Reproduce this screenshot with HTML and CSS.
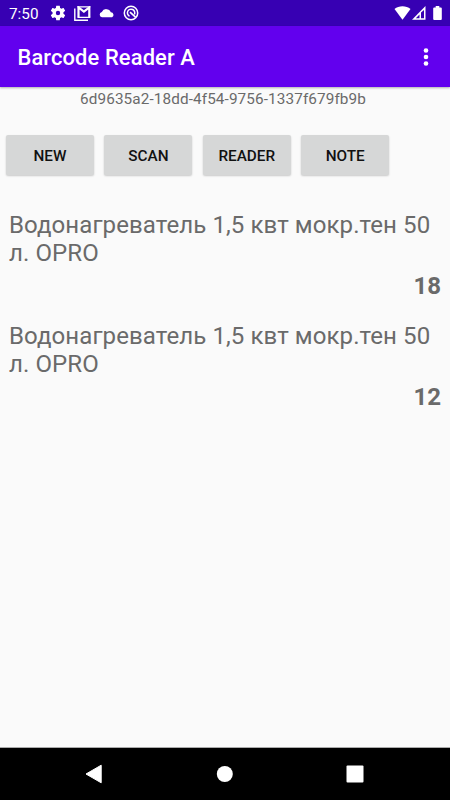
FILE: index.html
```html
<!DOCTYPE html>
<html lang="en">
<head>
    <meta charset="UTF-8">
    <meta name="viewport" content="width=device-width, initial-scale=1.0">
    <title>Barcode Reader A</title>
    <link rel="stylesheet" href="styles.css">
</head>
<body>
    <!-- Status bar -->
    <div class="status-bar">
        <span class="clock">7:50</span>
        <div class="notifications">
            <svg width="16" height="16" viewBox="1 1 22 22" fill="#fff"><path d="M19.43 12.98c.04-.32.07-.64.07-.98s-.03-.66-.07-.98l2.11-1.65c.19-.15.24-.42.12-.64l-2-3.46c-.12-.22-.39-.3-.61-.22l-2.49 1c-.52-.4-1.08-.73-1.69-.98l-.38-2.65C14.46 2.18 14.25 2 14 2h-4c-.25 0-.46.18-.49.42l-.38 2.65c-.61.25-1.17.59-1.69.98l-2.49-1c-.23-.09-.49 0-.61.22l-2 3.46c-.13.22-.07.49.12.64l2.11 1.65c-.04.32-.07.65-.07.98s.03.66.07.98l-2.11 1.65c-.19.15-.24.42-.12.64l2 3.46c.12.22.39.3.61.22l2.49-1c.52.4 1.08.73 1.69.98l.38 2.65c.03.24.24.42.49.42h4c.25 0 .46-.18.49-.42l.38-2.65c.61-.25 1.17-.59 1.69-.98l2.49 1c.23.09.49 0 .61-.22l2-3.46c.12-.22.07-.49-.12-.64l-2.11-1.65zM12 15A3 3 0 1 1 12 9a3 3 0 0 1 0 6z"/></svg>
            <svg width="17" height="15" viewBox="0 0 17 15" fill="none" stroke="#fff"><path d="M.8 2.500v11.700H14" stroke-width="1.400"/><path d="M4.500 11.300V1.500L9.900 5.700 15.300 1.500v9.800" stroke-width="2.200"/><path d="M3.500 .8h12.800M3.500 11.300h12.800" stroke-width="1.200"/></svg>
            <svg width="16" height="10" viewBox="0 0 16 10" fill="#fff"><path d="M3 9.200a2.700 2.700 0 0 1-.2-5.300A4.900 4.900 0 0 1 11.800 4.300a2.600 2.600 0 0 1 1.300 4.900z"/></svg>
            <svg width="16" height="16" viewBox="0 0 16 16" fill="none" stroke="#fff"><circle cx="8" cy="8" r="6.700" stroke-width="1.500"/><path d="M6.500 11.200A3.700 3.700 0 1 1 11.400 9.500" stroke-width="1.500"/><path d="M7 7.200l5.500 5" stroke-width="1.700"/></svg>
        </div>
        <div class="system-icons">
            <svg width="17" height="14" viewBox="0 0 17 14" fill="#fff"><path d="M.5 3C4.800-.7 12.200-.7 16.500 3L8.500 13.700z"/></svg>
            <svg width="14" height="14" viewBox="0 0 14 14"><path d="M13.500.1V13.800H0z" fill="#fff"/><path d="M7.500 8.500v3.700H3.800zM9 6.500l3-2.500v8.200H9z" fill="#3700b3"/></svg>
            <svg class="battery" width="9" height="15" viewBox="0 0 9 15" fill="#fff"><path d="M2.700 0h3.600v1.500h1.500q1 0 1 1V13q0 1-1 1H1.200q-1 0-1-1V2.500q0-1 1-1h1.500z"/></svg>
        </div>
    </div>

    <!-- App bar -->
    <header class="app-bar">
        <h1>Barcode Reader A</h1>
        <button class="menu-button" aria-label="More options">
            <svg width="6" height="20" viewBox="0 0 6 20" fill="#fff"><circle cx="3" cy="3.500" r="2.300"/><circle cx="3" cy="10" r="2.300"/><circle cx="3" cy="16.500" r="2.300"/></svg>
        </button>
    </header>

    <main class="content">
        <p class="device-id">6d9635a2-18dd-4f54-9756-1337f679fb9b</p>

        <div class="buttons">
            <button>NEW</button>
            <button>SCAN</button>
            <button>READER</button>
            <button>NOTE</button>
        </div>

        <ul class="items">
            <li>
                <p class="item-name">Водонагреватель 1,5 квт мокр.тен 50 л. OPRO</p>
                <p class="item-count">18</p>
            </li>
            <li>
                <p class="item-name">Водонагреватель 1,5 квт мокр.тен 50 л. OPRO</p>
                <p class="item-count">12</p>
            </li>
        </ul>
    </main>

    <!-- Navigation bar -->
    <nav class="nav-bar">
        <svg width="18" height="20" viewBox="0 0 18 20" fill="#fff"><path d="M16.200 1.200v17.600L1 10z" stroke="#fff" stroke-linejoin="round"/></svg>
        <svg width="18" height="18" viewBox="0 0 18 18" fill="#fff"><circle cx="9.800" cy="9" r="8"/></svg>
        <svg width="18" height="18" viewBox="0 0 18 18" fill="#fff"><rect x=".5" y=".5" width="17" height="17" rx="1"/></svg>
    </nav>
</body>
</html>
```
FILE: styles.css
```css
* {
    box-sizing: border-box;
}

body {
    display: flex;
    flex-direction: column;
    height: 800px;
    margin: 0;
    background: #fafafa;
    color: #6a6a6a;
    font-family: Roboto, sans-serif;
    overflow: hidden;
}

h1, p, ul {
    margin: 0;
    padding: 0;
}

svg {
    display: block;
}

button {
    border: none;
    padding: 0;
    font-family: inherit;
    cursor: pointer;
}

/* Status bar */
.status-bar {
    display: flex;
    align-items: center;
    flex: none;
    height: 26px;
    padding: 0 8px 0 9px;
    background: #3700b3;
    color: #fff;
}

.clock {
    width: 41px;
    font-size: 15.3px;
    line-height: 18px;
    padding-top: 2px;
}

.notifications {
    display: flex;
    align-items: center;
    gap: 8px;
}

.system-icons {
    display: flex;
    align-items: center;
    gap: 1px;
    margin-left: auto;
}

.battery {
    margin-left: 6px;
}

/* App bar */
.app-bar {
    display: flex;
    align-items: center;
    justify-content: space-between;
    flex: none;
    height: 61px;
    padding: 0 21px 0 17.5px;
    background: #6200ee;
    color: #fff;
    box-shadow: 0 1px 2px rgba(0, 0, 0, 0.3);
}

.app-bar h1 {
    padding-top: 3px;
    font-size: 21.9px;
    font-weight: 500;
    letter-spacing: 0.12px;
    line-height: 26px;
}

.menu-button {
    background: none;
}

/* Content */
.content {
    flex: 1;
}

.device-id {
    padding: 3px 4px 0 0;
    font-size: 15.3px;
    letter-spacing: 0.11px;
    line-height: 18px;
    text-align: center;
}

.buttons {
    display: flex;
    gap: 10.4px;
    padding: 27px 6px 0;
}

.buttons button {
    width: 88px;
    height: 40px;
    padding-top: 2px;
    border-radius: 2px;
    background: #d6d7d7;
    color: #111;
    font-size: 15.3px;
    font-weight: 500;
    box-shadow: 0 1px 2px rgba(0, 0, 0, 0.2);
}

/* Item list */
.items {
    padding: 36px 9px 0;
    list-style: none;
}

.items li {
    height: 111px;
}

.item-name,
.item-count {
    font-size: 24.06px;
    line-height: 28.3px;
}

.item-name {
    letter-spacing: 0.07px;
}

.item-count {
    padding-top: 4px;
    font-weight: bold;
    text-align: right;
}

/* Navigation bar */
.nav-bar {
    display: flex;
    align-items: center;
    justify-content: space-between;
    flex: none;
    height: 53px;
    padding: 0 86.5px 0 85px;
    border-top: 1px solid #aaa;
    background: #000;
}
```
